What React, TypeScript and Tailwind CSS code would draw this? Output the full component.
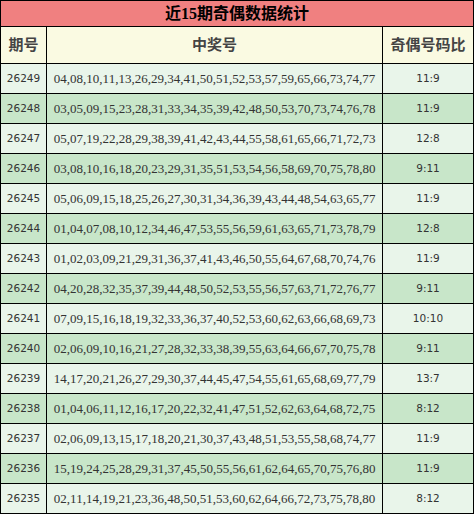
import React from 'react';

const rows: [string, string, string][] = [
  ["26249", "04,08,10,11,13,26,29,34,41,50,51,52,53,57,59,65,66,73,74,77", "11:9"],
  ["26248", "03,05,09,15,23,28,31,33,34,35,39,42,48,50,53,70,73,74,76,78", "11:9"],
  ["26247", "05,07,19,22,28,29,38,39,41,42,43,44,55,58,61,65,66,71,72,73", "12:8"],
  ["26246", "03,08,10,16,18,20,23,29,31,35,51,53,54,56,58,69,70,75,78,80", "9:11"],
  ["26245", "05,06,09,15,18,25,26,27,30,31,34,36,39,43,44,48,54,63,65,77", "11:9"],
  ["26244", "01,04,07,08,10,12,34,46,47,53,55,56,59,61,63,65,71,73,78,79", "12:8"],
  ["26243", "01,02,03,09,21,29,31,36,37,41,43,46,50,55,64,67,68,70,74,76", "11:9"],
  ["26242", "04,20,28,32,35,37,39,44,48,50,52,53,55,56,57,63,71,72,76,77", "9:11"],
  ["26241", "07,09,15,16,18,19,32,33,36,37,40,52,53,60,62,63,66,68,69,73", "10:10"],
  ["26240", "02,06,09,10,16,21,27,28,32,33,38,39,55,63,64,66,67,70,75,78", "9:11"],
  ["26239", "14,17,20,21,26,27,29,30,37,44,45,47,54,55,61,65,68,69,77,79", "13:7"],
  ["26238", "01,04,06,11,12,16,17,20,22,32,41,47,51,52,62,63,64,68,72,75", "8:12"],
  ["26237", "02,06,09,13,15,17,18,20,21,30,37,43,48,51,53,55,58,68,74,77", "11:9"],
  ["26236", "15,19,24,25,28,29,31,37,45,50,55,56,61,62,64,65,70,75,76,80", "11:9"],
  ["26235", "02,11,14,19,21,23,36,48,50,51,53,60,62,64,66,72,73,75,78,80", "8:12"],
];

const cjk = "font-['Liberation_Serif','Noto_Sans_CJK_SC',serif]";

export default function App() {
  return (
    <div className="w-[474px] h-[514px] bg-white overflow-hidden">
      <table className="w-[474px] table-fixed border-collapse border border-black">
        <colgroup>
          <col className="w-[46px]" />
          <col className="w-[336px]" />
          <col />
        </colgroup>
        <thead>
          <tr className="h-[26px]">
            <th colSpan={3} className={`border border-black bg-[#f08080] text-[16px] font-bold text-black leading-none ${cjk}`}>
              近15期奇偶数据统计
            </th>
          </tr>
          <tr className="h-[37px] bg-[#fafae2]">
            <th className={`border border-black text-[15px] font-bold text-[#444] ${cjk}`}>期号</th>
            <th className={`border border-black text-[15px] font-bold text-[#444] ${cjk}`}>中奖号</th>
            <th className={`border border-black text-[15px] font-bold text-[#444] ${cjk}`}>奇偶号码比</th>
          </tr>
        </thead>
        <tbody>
          {rows.map(([issue, nums, ratio], i) => (
            <tr key={issue} className={`h-[30px] ${i % 2 === 0 ? 'bg-[#e9f5ea]' : 'bg-[#c8e6c9]'}`}>
              <td className="border border-black text-center text-[10.5px] text-[#333] font-['DejaVu_Sans',sans-serif]">{issue}</td>
              <td className="border border-black text-center text-[13px] text-[#333] font-['Liberation_Serif',serif]">{nums}</td>
              <td className="border border-black text-center text-[10.5px] text-[#333] font-['DejaVu_Sans',sans-serif]">{ratio}</td>
            </tr>
          ))}
        </tbody>
      </table>
    </div>
  );
}
